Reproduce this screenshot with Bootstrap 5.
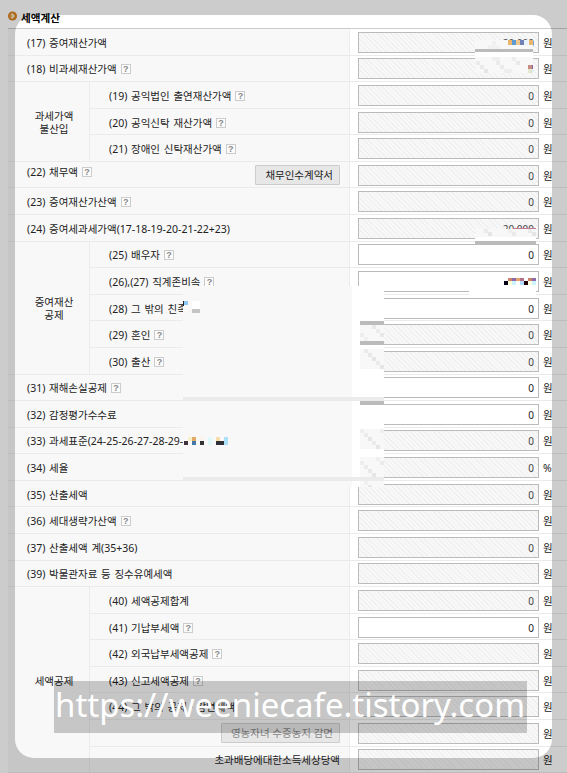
<!DOCTYPE html>
<html lang="ko">
<head>
<meta charset="utf-8">
<meta name="viewport" content="width=device-width, initial-scale=1">
<title>세액계산</title>
<link href="https://cdn.jsdelivr.net/npm/bootstrap@5.3.0/dist/css/bootstrap.min.css" rel="stylesheet">
<style>
  body { font-family: "Noto Sans", "Noto Sans CJK KR", sans-serif; font-size: 10.5px; line-height: 13px; color: #222; height: 773px; }
  .page-title { height: 28px; padding: 9px 0 0 8px; gap: 4px; font-size: 10.6px; color: #000; }
  .page-title svg { margin-top: 2px; }
  .page-title h1 { font-size: inherit; line-height: 18px; }
  .tax-grid { margin-left: 8px; border-top: 1px solid #ccc; grid-template-columns: 82px 260px 1fr; grid-template-rows: repeat(28, 26.59px); }
  .tax-grid > div { border-bottom: 1px solid #ebebeb; min-width: 0; white-space: nowrap; }
  .label-cell, .group-cell { background: #f8f8f8; border-right: 1px solid #ebebeb; }
  .label-cell { padding: 3px 9px 0 19px; word-spacing: 1px; }
  .label-cell.wide { grid-column: 1 / span 2; }
  .label-cell.raised { padding-top: 0; }
  .label-cell.raised .caption-text { margin-top: -5px; }
  .group-cell { grid-column: 1; padding: 3px 0 0 11px; }
  .span3 { grid-row: span 3; } .span5 { grid-row: span 5; } .span7 { grid-row: span 7; }
  .help { width: 10px; height: 10px; border: 1px solid #ccc; font: 700 9px/9px "Liberation Sans", sans-serif; color: #888; background: #fcfcfc; margin: -1px 0 0 4px; }
  .value-cell { grid-column: 3; padding: 1px 0 0 8px; gap: 4px; }
  .value-cell .unit { padding-top: 2px; }
  .value-cell .form-control { width: 181px; height: 21px; min-height: 0; padding: 1px 4px 0 0; border: 1px solid #bbb; font-size: 10px; line-height: 18px; color: #222; }
  .value-cell .form-control[readonly] { background: repeating-linear-gradient(45deg, #f8f8f8 0 2.3px, #f0f0f0 2.3px 3.3px); color: #444; }
  .label-cell .btn { height: 20px; padding: 0 6px 0 9px; font-size: 10.5px; line-height: 18px; color: #222; background: #e7e7e7; border-color: #ccc; border-radius: 1px; }
  .label-cell .btn:disabled { color: #888; opacity: 1; background: #e7e7e7; border-color: #ccc; }
  .mosaic { left: 0; top: 0; z-index: 1; }
  .frame { left: 15px; top: 15px; width: 537px; height: 743px; border-radius: 19px; box-shadow: 0 0 0 60px rgba(0,0,0,.2); z-index: 2; }
  .stamp { left: 54px; top: 681px; width: 473px; height: 52px; background: rgba(0,0,0,.2); z-index: 3; }
</style>
</head>
<body class="position-relative overflow-hidden bg-white">
<header class="page-title d-flex align-items-start">
  <svg width="9" height="10" viewBox="0 0 9 10"><circle cx="4.5" cy="5" r="4.5" fill="#d78221"/><circle cx="4.3" cy="4.9" r="2.6" fill="#eaa552"/><path d="M3.5 2.8 5.7 5 3.5 7.2" fill="none" stroke="#fff3d8" stroke-width="1.3"/></svg>
  <h1 class="fw-bold mb-0">세액계산</h1>
</header>
<main class="tax-grid d-grid" id="taxGrid"></main>

<svg class="mosaic position-absolute pe-none" id="mosaic" width="567" height="773" shape-rendering="crispEdges"></svg>
<div class="frame position-absolute pe-none"></div>
<svg class="stamp position-absolute pe-none" width="473" height="52"><text x="1" y="36" textLength="470" lengthAdjust="spacingAndGlyphs" font-family="Noto Sans, sans-serif" font-size="33.5" fill="#fff">https://weeniecafe.tistory.com</text></svg>

<script src="https://cdn.jsdelivr.net/npm/bootstrap@5.3.0/dist/js/bootstrap.bundle.min.js"></script>
<script>
  // t: label, h: help mark, v: value, e: editable, g: group heading and its span
  const rows = [
    {t:'(17) 증여재산가액', v:'20,000'},
    {t:'(18) 비과세재산가액', h:1, v:''},
    {g:['과세가액<br>불산입',3], t:'(19) 공익법인 출연재산가액', h:1, v:'0'},
    {s:1, t:'(20) 공익신탁 재산가액', h:1, v:'0'},
    {s:1, t:'(21) 장애인 신탁재산가액', h:1, v:'0'},
    {t:'(22) 채무액', h:1, v:'0', b:'채무인수계약서'},
    {t:'(23) 증여재산가산액', h:1, v:'0'},
    {t:'(24) 증여세과세가액(17-18-19-20-21-22+23)', v:'20,000'},
    {g:['증여재산<br>공제',5], t:'(25) 배우자', h:1, v:'0', e:1},
    {s:1, t:'(26),(27) 직계존비속', h:1, v:'', e:1},
    {s:1, t:'(28) 그 밖의 친족', v:'0', e:1},
    {s:1, t:'(29) 혼인', h:1, v:'0'},
    {s:1, t:'(30) 출산', h:1, v:'0'},
    {t:'(31) 재해손실공제', h:1, v:'0', e:1},
    {t:'(32) 감정평가수수료', v:'0', e:1},
    {t:'(33) 과세표준(24-25-26-27-28-29-', v:'0'},
    {t:'(34) 세율', v:'0', u:'%'},
    {t:'(35) 산출세액', v:'0'},
    {t:'(36) 세대생략가산액', h:1, v:''},
    {t:'(37) 산출세액 계(35+36)', v:'0'},
    {t:'(39) 박물관자료 등 징수유예세액', v:''},
    {g:['세액공제',7], t:'(40) 세액공제합계', v:'0'},
    {s:1, t:'(41) 기납부세액', h:1, v:'0', e:1},
    {s:1, t:'(42) 외국납부세액공제', h:1, v:''},
    {s:1, t:'(43) 신고세액공제', h:1, v:''},
    {s:1, t:'(44) 그 밖의 공제ㆍ감면세액', v:''},
    {s:1, t:'', b:'영농자녀 수증농지 감면', off:1, v:''},
    {s:1, t:'초과배당에대한소득세상당액', end:1, v:''}
  ];
  document.getElementById('taxGrid').innerHTML = rows.map(r => {
    const sub = r.g || r.s;
    const group = r.g ? `<div class="group-cell span${r.g[1]} d-flex align-items-center justify-content-center text-center"><span>${r.g[0]}</span></div>` : '';
    const help = r.h ? '<span class="help d-inline-flex justify-content-center flex-shrink-0">?</span>' : '';
    const btn = r.b ? `<button type="button" class="btn btn-sm ms-auto" ${r.off ? 'disabled' : ''}>${r.b}</button>` : '';
    return group +
      `<div class="label-cell d-flex align-items-center ${sub ? '' : 'wide'} ${r.b ? 'raised' : ''} ${r.end ? 'justify-content-end' : ''}"><span class="caption-text d-flex align-items-center"><span>${r.t}</span>${help}</span>${btn}</div>` +
      `<div class="value-cell d-flex align-items-center"><input class="form-control rounded-0 text-end" value="${r.v}" aria-label="${r.t || r.b}" ${r.e ? '' : 'readonly'}><span class="unit">${r.u || '원'}</span></div>`;
  }).join('');

  // censored areas: x, y, width, height, fill
  const cells = [
    [475,40,58,9,'#f8f8f8'],[475,49,58,3,'#bbb'],[475,52,58,5,'#fff'],[475,57,58,16,'#f8f8f8'],
    [492,41,4,4,'#efefef'],[488,45,12,4,'#f1f1f1'],
    [508,40,4,5,'#edb46c'],[512,40,4,5,'#5c9ad4'],[516,40,4,5,'#f0c68c'],[520,40,4,5,'#7080b8'],[524,40,4,5,'#e8f4fa'],[529,40,4,5,'#edb46c'],
    [476,61,4,4,'#ebebeb'],[480,65,4,4,'#e9e9e9'],[484,69,4,4,'#e5e5e5'],[492,57,8,4,'#efefef'],[496,61,4,4,'#ebebeb'],[500,65,4,4,'#ebebeb'],[504,69,8,4,'#eee'],[512,57,4,4,'#ededed'],[516,61,4,4,'#e9e9e9'],
    [528,65,4,4,'#c98c80'],[532,65,1,4,'#8860a8'],[528,69,4,4,'#e6e6d0'],[532,69,1,4,'#d0f0f8'],
    [475,229,61,8,'#f8f8f8'],[475,237,61,4,'#fff'],[475,241,61,3,'#bbb'],[513,228,23,1,'#c57a91'],
    [484,229,4,4,'#eaeaea'],[488,232,4,4,'#e5e5e5'],[508,229,4,4,'#efefef'],[512,232,4,4,'#eaeaea'],[528,229,4,4,'#eaeaea'],[532,232,4,4,'#e5e5e5'],
    [508,278,4,3,'#cc806c'],[512,278,4,3,'#8c6ca8'],[516,278,4,3,'#e4a470'],[520,278,4,3,'#b87088'],[528,278,4,3,'#cc806c'],[532,278,4,3,'#8c6ca8'],
    [504,281,4,4,'#000018'],[508,281,4,4,'#ffffd8'],[512,281,4,4,'#ccf4ff'],[520,281,4,4,'#b4dcff'],[524,281,4,4,'#200008'],[528,281,4,4,'#ffffe0'],[532,281,4,4,'#ccf4ff'],
    [469,289,67,7,'#fff'],
    [183,286,169,201,'#f8f8f8'],[352,286,32,201,'#fff'],
    [184,301,4,4,'#8cc8f8'],[183,301,1,5,'#222'],[192,301,8,8,'#fff'],[192,309,8,4,'#c4c4c4'],
    [184,441,4,4,'#40303a'],[188,437,4,4,'#f8f0c8'],[192,437,4,4,'#e4a868'],[192,441,4,4,'#4478a8'],[200,437,4,4,'#f8f4ec'],[200,441,4,4,'#333'],[208,437,4,8,'#e0f8f8'],[216,437,4,4,'#f8dcac'],[216,441,8,4,'#303038'],[224,437,4,8,'#ace0f8'],
    [360,321,24,4,'#bbb'],[360,325,24,16,'#f8f8f8'],[360,341,24,4,'#bbb'],[360,349,24,20,'#f8f8f8'],
    [183,397,201,4,'#ebebeb'],[360,401,24,4,'#bbb'],[360,429,24,20,'#f8f8f8'],[360,457,24,30,'#f8f8f8'],[183,477,201,4,'#ebebeb'],
    [372,325,4,4,'#e8e8e8'],[376,329,4,4,'#ebebeb'],[380,333,4,4,'#e8e8e8'],[360,333,4,4,'#ededed'],[364,337,4,4,'#efefef'],
    [364,349,4,4,'#ebebeb'],[368,353,4,4,'#e8e8e8'],[372,357,4,4,'#e5e5e5'],[376,361,4,4,'#ebebeb'],[380,365,4,4,'#e5e5e5'],
    [360,429,4,4,'#efefef'],[364,433,4,4,'#ebebeb'],[368,437,4,4,'#e5e5e5'],[372,441,4,4,'#ebebeb'],[376,445,4,4,'#e5e5e5'],[380,429,4,4,'#efefef'],
    [360,461,4,4,'#eee'],[364,465,4,4,'#ebebeb'],[368,469,4,4,'#e8e8e8'],[372,473,4,4,'#e5e5e5'],[376,457,4,4,'#efefef'],[380,461,4,4,'#ebebeb'],[364,481,4,4,'#f0f0f0'],[368,485,4,2,'#e8e8e8']
  ];
  document.getElementById('mosaic').innerHTML = cells.map(([x,y,w,h,f]) =>
    `<rect x="${x}" y="${y}" width="${w}" height="${h}" fill="${f}"/>`).join('');
</script>
</body>
</html>
